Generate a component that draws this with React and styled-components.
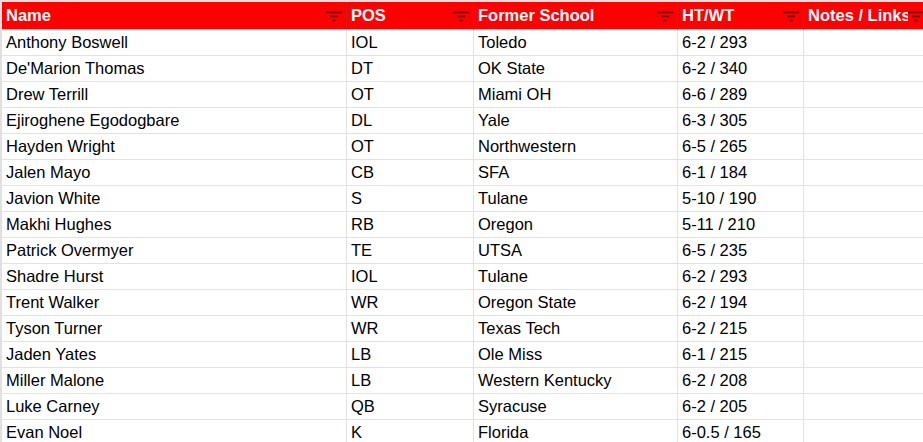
import React from "react";
import styled, { createGlobalStyle } from "styled-components";

// ----- Global -----
const GlobalStyle = createGlobalStyle`
  html, body {
    margin: 0;
    padding: 0;
    background: #fff;
    overflow: hidden;
  }
  body {
    font-family: 'Liberation Sans', Arial, sans-serif;
  }
`;

// ----- Sheet grid -----
const Sheet = styled.div`
  display: grid;
  grid-template-columns: 345px 127px 204px 126px 130px;
  width: max-content;
  border-top: 2px solid #e0e0e0;
  border-left: 2px solid #e0e0e0;
`;

const HeaderCell = styled.div`
  position: relative;
  box-sizing: border-box;
  height: 28px;
  padding: 0 4px 1px;
  display: flex;
  align-items: center;
  background: #ff0000;
  color: #fff;
  font-size: 16.5px;
  font-weight: bold;
  white-space: nowrap;
  overflow: hidden;
  border-right: 1px solid #d41a1a;
  border-bottom: 1px solid #e0e0e0;
`;

const Cell = styled.div`
  box-sizing: border-box;
  height: 26px;
  padding: 0 4px;
  display: flex;
  align-items: center;
  color: #000;
  font-size: 16.5px;
  white-space: nowrap;
  overflow: hidden;
  border-right: 1px solid #e2e2e2;
  border-bottom: 1px solid #e2e2e2;
`;

// filter button sits over the header text (it clips "Notes / Links")
const FilterBtn = styled.span`
  position: absolute;
  right: ${p => p.$right || 4}px;
  top: 9px;
  width: 16px;
  height: 11px;
  background: #ff0000;
  display: flex;
`;

const FilterIcon = ({ right }) => (
  <FilterBtn $right={right}>
    <svg width="16" height="11" viewBox="0 0 16 11">
      <rect x="0" y="0.5" width="16" height="1.8" fill="#7d0000" />
      <rect x="4" y="4.5" width="8" height="1.8" fill="#7d0000" />
      <rect x="6.5" y="8.5" width="3" height="1.8" fill="#7d0000" />
    </svg>
  </FilterBtn>
);

const columns = ["Name", "POS", "Former School", "HT/WT", "Notes / Links"];

const players = [
  ["Anthony Boswell", "IOL", "Toledo", "6-2 / 293"],
  ["De'Marion Thomas", "DT", "OK State", "6-2 / 340"],
  ["Drew Terrill", "OT", "Miami OH", "6-6 / 289"],
  ["Ejiroghene Egodogbare", "DL", "Yale", "6-3 / 305"],
  ["Hayden Wright", "OT", "Northwestern", "6-5 / 265"],
  ["Jalen Mayo", "CB", "SFA", "6-1 / 184"],
  ["Javion White", "S", "Tulane", "5-10 / 190"],
  ["Makhi Hughes", "RB", "Oregon", "5-11 / 210"],
  ["Patrick Overmyer", "TE", "UTSA", "6-5 / 235"],
  ["Shadre Hurst", "IOL", "Tulane", "6-2 / 293"],
  ["Trent Walker", "WR", "Oregon State", "6-2 / 194"],
  ["Tyson Turner", "WR", "Texas Tech", "6-2 / 215"],
  ["Jaden Yates", "LB", "Ole Miss", "6-1 / 215"],
  ["Miller Malone", "LB", "Western Kentucky", "6-2 / 208"],
  ["Luke Carney", "QB", "Syracuse", "6-2 / 205"],
  ["Evan Noel", "K", "Florida", "6-0.5 / 165"],
];

function App() {
  return (
    <>
      <GlobalStyle />
      <Sheet>
        {columns.map((c, i) => (
          <HeaderCell key={c}>
            {c}
            <FilterIcon right={i === columns.length - 1 ? 9 : 4} />
          </HeaderCell>
        ))}
        {players.map((p, r) => (
          <React.Fragment key={r}>
            {p.map((v, i) => <Cell key={i}>{v}</Cell>)}
            <Cell />
          </React.Fragment>
        ))}
      </Sheet>
    </>
  );
}

export default App;
